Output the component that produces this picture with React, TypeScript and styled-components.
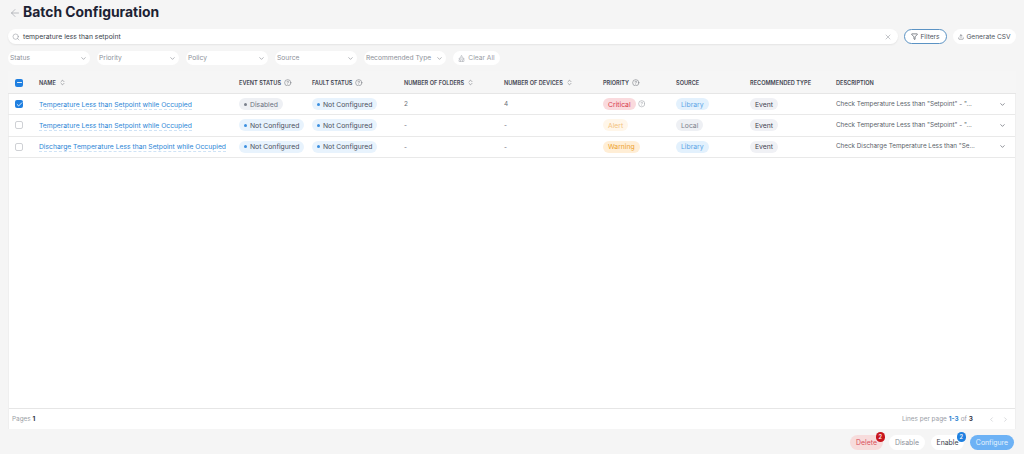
import React, { FC } from 'react';
import styled, { createGlobalStyle } from 'styled-components';
import {
  ArrowLeft,
  Check,
  ChevronDown,
  ChevronsUpDown,
  ChevronLeft,
  ChevronRight,
  CircleHelp,
  Funnel,
  Minus,
  Search,
  Upload,
  X,
  BrushCleaning,
} from 'lucide-react';

const GlobalStyle = createGlobalStyle`
  html, body { margin: 0; padding: 0; }
  body {
    background: #f5f5f5;
    font-family: Inter, "Noto Sans", sans-serif;
    color: #3a3f4b;
  }
  * { box-sizing: border-box; }
`;

const Page = styled.div`
  width: 1024px;
  height: 454px;
  padding: 3px 8px 4px;
  display: flex;
  flex-direction: column;
  overflow: hidden;
`;

const TitleRow = styled.div`
  display: flex;
  align-items: center;
  height: 19px;
  margin-left: 1px;
  gap: 2px;
  color: #9a9ea5;
`;

const Title = styled.h1`
  margin: 0;
  font-size: 13.9px;
  line-height: 19px;
  font-weight: 700;
  color: #1c2233;
`;

const SearchRow = styled.div`
  display: flex;
  align-items: center;
  margin-top: 7px;
  gap: 6px;
`;

const SearchBox = styled.div`
  width: 890px;
  height: 15px;
  background: #fff;
  border-radius: 8px;
  box-shadow: 0 1px 2px rgba(0, 0, 0, 0.07);
  display: flex;
  align-items: center;
  padding: 0 6px 0 4px;
  gap: 3px;
  font-size: 6.8px;
  color: #3a3f4b;
  svg { color: #8b8f97; flex: none; }
`;

const SearchText = styled.span`
  flex: 1;
`;

const PillButton = styled.div<{ $active?: boolean }>`
  height: 15px;
  border-radius: 8px;
  display: flex;
  align-items: center;
  justify-content: center;
  gap: 2px;
  background: #fff;
  font-size: 6.6px;
  color: #4e535e;
  border: ${(p) => (p.$active ? '1px solid #5b93c4' : 'none')};
  width: ${(p) => (p.$active ? '43px' : '63px')};
`;

const FilterRow = styled.div`
  display: flex;
  align-items: center;
  margin-top: 7px;
  gap: 7px;
`;

const SelectBox = styled.div`
  width: 82px;
  height: 14px;
  background: #fff;
  border-radius: 7px;
  display: flex;
  align-items: center;
  justify-content: space-between;
  padding: 0 3px 0 2px;
  font-size: 6.7px;
  color: #8d9199;
  svg { color: #60646c; }
`;

const ClearButton = styled(SelectBox)`
  width: 47px;
  justify-content: center;
  gap: 3px;
  padding: 0;
  color: #9a9ea5;
  svg { color: #8d9199; }
`;

const Table = styled.div`
  margin-top: 6px;
  height: 358px;
  background: #fff;
  border: 1px solid #efefef;
  border-bottom: none;
  display: flex;
  flex-direction: column;
`;

const columns = '31px 200px 73px 92px 100px 99px 73px 74px 86px 1fr';

const HeaderRow = styled.div`
  display: grid;
  grid-template-columns: ${columns};
  align-items: center;
  height: 23px;
  padding-top: 1px;
  background: #f6f6f6;
  border-bottom: 1px solid #e6e6e6;
  margin: -1px -1px 0 -1px;
`;

const BodyRow = styled.div`
  display: grid;
  grid-template-columns: ${columns};
  align-items: center;
  height: 21.33px;
  border-bottom: 1px solid #e9e9e9;
  margin-left: -1px;
  font-size: 6.4px;
`;

const HeadCell = styled.div`
  display: flex;
  align-items: center;
  gap: 3px;
  font-size: 5.6px;
  font-weight: 600;
  color: #3f4450;
  white-space: nowrap;
  svg { color: #5f636b; flex: none; }
`;

const CheckCell = styled.div`
  padding-left: 7px;
  display: flex;
  align-items: center;
`;

const CheckBox = styled.div<{ $on?: boolean }>`
  width: 8px;
  height: 8px;
  border-radius: 2px;
  background: ${(p) => (p.$on ? '#1f7fe0' : '#fff')};
  border: ${(p) => (p.$on ? 'none' : '1px solid #cfd1d5')};
  display: flex;
  align-items: center;
  justify-content: center;
  color: #fff;
`;

const NameLink = styled.span`
  color: #2b86d6;
  font-size: 6.75px;
  line-height: 8px;
  white-space: nowrap;
  border-bottom: 1px dashed #cfe3f6;
  justify-self: start;
  padding-top: 2px;
`;

const tones = {
  gray: { bg: '#eef0f4', fg: '#6c7280', dot: '#7a808c' },
  blue: { bg: '#e8f3fd', fg: '#4a5060', dot: '#3b8fe0' },
  sky: { bg: '#e3f1fd', fg: '#5aa5e6', dot: '#5aa5e6' },
  red: { bg: '#fadadd', fg: '#d6394b', dot: '#d6394b' },
  cream: { bg: '#fff6e9', fg: '#f3c27f', dot: '#f3c27f' },
  amber: { bg: '#ffeed6', fg: '#eda32f', dot: '#eda32f' },
  slate: { bg: '#f0f1f5', fg: '#3f4450', dot: '#3f4450' },
  local: { bg: '#eef0f4', fg: '#7d828d', dot: '#7d828d' },
};

type Tone = keyof typeof tones;

const Badge = styled.span<{ $tone: Tone }>`
  display: inline-flex;
  align-items: center;
  gap: 3px;
  height: 12px;
  padding: 0 5px;
  border-radius: 6px;
  font-size: 6.8px;
  white-space: nowrap;
  background: ${(p) => tones[p.$tone].bg};
  color: ${(p) => tones[p.$tone].fg};
  justify-self: start;
`;

const Dot = styled.i<{ $tone: Tone }>`
  width: 3px;
  height: 3px;
  border-radius: 50%;
  background: ${(p) => tones[p.$tone].dot};
`;

const PriorityCell = styled.div`
  display: flex;
  align-items: center;
  gap: 2px;
  svg { color: #8d9199; }
`;

const Plain = styled.span`
  font-size: 6.4px;
  color: #6a6f79;
`;

const DescCell = styled.div`
  display: flex;
  align-items: center;
  justify-content: space-between;
  padding-right: 9px;
  color: #5a5f6a;
  font-size: 6.3px;
  margin-top: -1px;
  svg { color: #3f4450; flex: none; margin-top: 1px; }
`;

const Spacer = styled.div`
  flex: 1;
`;

const Footer = styled.div`
  height: 21px;
  border-top: 1px solid #e6e6e6;
  display: flex;
  align-items: center;
  justify-content: space-between;
  padding: 0 6px 0 3px;
  font-size: 6.4px;
  color: #9a9ea6;
`;

const Strong = styled.b<{ $blue?: boolean }>`
  font-weight: 700;
  color: ${(p) => (p.$blue ? '#2b7fd0' : '#2b3040')};
`;

const Pager = styled.div`
  display: flex;
  align-items: center;
  gap: 2px;
`;

const PagerNav = styled.div`
  display: flex;
  gap: 7px;
  margin-left: 13px;
  color: #a9adb3;
`;

const Actions = styled.div`
  display: flex;
  justify-content: flex-end;
  gap: 6px;
  margin-top: 6px;
  padding-right: 2px;
`;

const ActionButton = styled.div<{ $kind: 'delete' | 'disable' | 'enable' | 'primary'; $w: number }>`
  position: relative;
  height: 15px;
  width: ${(p) => p.$w}px;
  border-radius: 7.5px;
  display: flex;
  align-items: center;
  justify-content: center;
  font-size: 6.9px;
  background: ${(p) =>
    p.$kind === 'delete' ? '#f7dcdc' : p.$kind === 'primary' ? '#6db2f5' : '#fff'};
  color: ${(p) =>
    p.$kind === 'delete'
      ? '#d9505c'
      : p.$kind === 'primary'
        ? '#e6f2fd'
        : p.$kind === 'disable'
          ? '#8d9199'
          : '#3a3f4b'};
`;

const Count = styled.span<{ $color: string }>`
  position: absolute;
  top: -3px;
  right: -2px;
  width: 9.5px;
  height: 9.5px;
  border-radius: 50%;
  background: ${(p) => p.$color};
  color: #fff;
  font-size: 5.6px;
  font-weight: 600;
  display: flex;
  align-items: center;
  justify-content: center;
`;

type RowData = {
  name: string;
  event: [string, Tone];
  folders: string;
  devices: string;
  priority: [string, Tone];
  source: [string, Tone];
  description: string;
  checked?: boolean;
};

const ROWS: RowData[] = [
  {
    name: 'Temperature Less than Setpoint while Occupied',
    event: ['Disabled', 'gray'],
    folders: '2',
    devices: '4',
    priority: ['Critical', 'red'],
    source: ['Library', 'sky'],
    description: 'Check Temperature Less than "Setpoint" - "...',
    checked: true,
  },
  {
    name: 'Temperature Less than Setpoint while Occupied',
    event: ['Not Configured', 'blue'],
    folders: '-',
    devices: '-',
    priority: ['Alert', 'cream'],
    source: ['Local', 'local'],
    description: 'Check Temperature Less than "Setpoint" - "...',
  },
  {
    name: 'Discharge Temperature Less than Setpoint while Occupied',
    event: ['Not Configured', 'blue'],
    folders: '-',
    devices: '-',
    priority: ['Warning', 'amber'],
    source: ['Library', 'sky'],
    description: 'Check Discharge Temperature Less than "Se...',
  },
];

const FILTERS = ['Status', 'Priority', 'Policy', 'Source', 'Recommended Type'];

const Help: FC = () => <CircleHelp size={7.5} strokeWidth={1.5} />;
const Sort: FC = () => <ChevronsUpDown size={7} strokeWidth={1.8} />;

const App: FC = () => {
  return (
    <Page>
      <GlobalStyle />
      <TitleRow>
        <ArrowLeft size={12} strokeWidth={1.3} />
        <Title>Batch Configuration</Title>
      </TitleRow>

      <SearchRow>
        <SearchBox>
          <Search size={8} strokeWidth={1.5} />
          <SearchText>temperature less than setpoint</SearchText>
          <X size={8} strokeWidth={1.5} />
        </SearchBox>
        <PillButton $active>
          <Funnel size={7} strokeWidth={2} color="#2f3542" />
          Filters
        </PillButton>
        <PillButton>
          <Upload size={6} strokeWidth={1.8} />
          Generate CSV
        </PillButton>
      </SearchRow>

      <FilterRow>
        {FILTERS.map((f) => (
          <SelectBox key={f}>
            {f}
            <ChevronDown size={7} strokeWidth={1.6} />
          </SelectBox>
        ))}
        <ClearButton>
          <BrushCleaning size={7} strokeWidth={1.5} />
          Clear All
        </ClearButton>
      </FilterRow>

      <Table>
        <HeaderRow>
          <CheckCell>
            <CheckBox $on>
              <Minus size={7} strokeWidth={3} />
            </CheckBox>
          </CheckCell>
          <HeadCell>
            NAME <Sort />
          </HeadCell>
          <HeadCell>
            EVENT STATUS <Help />
          </HeadCell>
          <HeadCell>
            FAULT STATUS <Help />
          </HeadCell>
          <HeadCell>
            NUMBER OF FOLDERS <Sort />
          </HeadCell>
          <HeadCell>
            NUMBER OF DEVICES <Sort />
          </HeadCell>
          <HeadCell>
            PRIORITY <Help />
          </HeadCell>
          <HeadCell>SOURCE</HeadCell>
          <HeadCell>RECOMMENDED TYPE</HeadCell>
          <HeadCell>DESCRIPTION</HeadCell>
        </HeaderRow>

        {ROWS.map((row, i) => (
          <BodyRow key={i}>
            <CheckCell>
              <CheckBox $on={row.checked}>
                {row.checked ? <Check size={7} strokeWidth={3} /> : null}
              </CheckBox>
            </CheckCell>
            <NameLink>{row.name}</NameLink>
            <Badge $tone={row.event[1]}>
              <Dot $tone={row.event[1]} />
              {row.event[0]}
            </Badge>
            <Badge $tone="blue">
              <Dot $tone="blue" />
              Not Configured
            </Badge>
            <Plain>{row.folders}</Plain>
            <Plain>{row.devices}</Plain>
            <PriorityCell>
              <Badge $tone={row.priority[1]}>{row.priority[0]}</Badge>
              {row.checked ? <Help /> : null}
            </PriorityCell>
            <Badge $tone={row.source[1]}>{row.source[0]}</Badge>
            <Badge $tone="slate">Event</Badge>
            <DescCell>
              <span>{row.description}</span>
              <ChevronDown size={7} strokeWidth={2} />
            </DescCell>
          </BodyRow>
        ))}

        <Spacer />

        <Footer>
          <span>
            Pages <Strong>1</Strong>
          </span>
          <Pager>
            Lines per page <Strong $blue>1-3</Strong> of <Strong>3</Strong>
            <PagerNav>
              <ChevronLeft size={7} strokeWidth={1.5} />
              <ChevronRight size={7} strokeWidth={1.5} />
            </PagerNav>
          </Pager>
        </Footer>
      </Table>

      <Actions>
        <ActionButton $kind="delete" $w={33}>
          Delete
          <Count $color="#c8161d">2</Count>
        </ActionButton>
        <ActionButton $kind="disable" $w={36}>
          Disable
        </ActionButton>
        <ActionButton $kind="enable" $w={33}>
          Enable
          <Count $color="#1f80e0">2</Count>
        </ActionButton>
        <ActionButton $kind="primary" $w={44}>
          Configure
        </ActionButton>
      </Actions>
    </Page>
  );
};

export default App;
